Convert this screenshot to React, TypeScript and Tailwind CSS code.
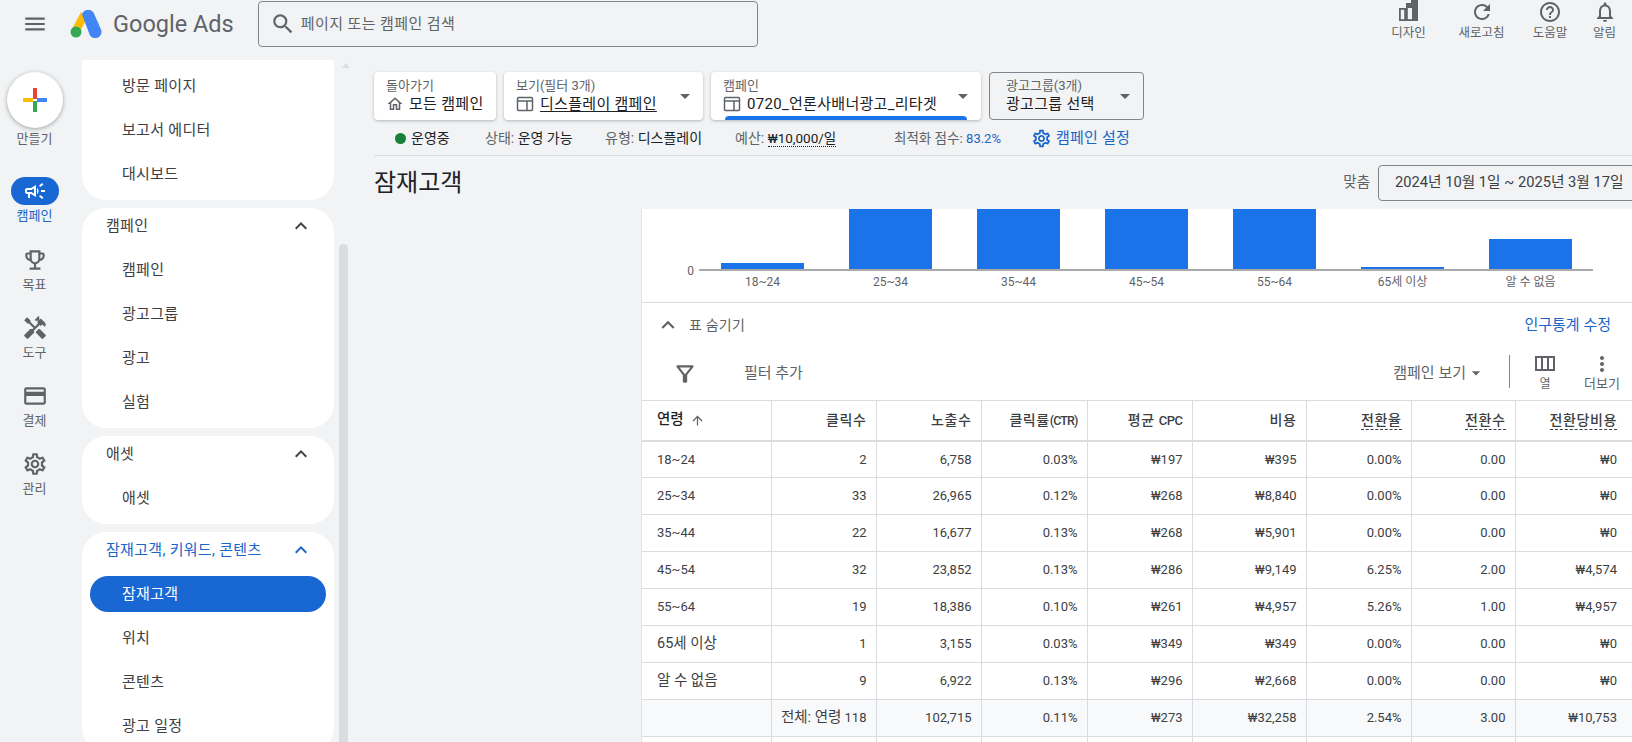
import React from "react";
import {
  MdMenu, MdSearch, MdOutlineHome, MdOutlineCampaign, MdOutlineEmojiEvents, MdHandyman, MdOutlineCreditCard,
  MdOutlineSettings, MdRefresh, MdHelpOutline, MdNotificationsNone, MdOutlineFilterAlt,
  MdMoreVert, MdArrowUpward, MdExpandLess, MdArrowDropDown,
} from "react-icons/md";

const WebIcon = () => (
  <svg width="18" height="18" viewBox="0 0 18 18" fill="none" stroke="#5f6368" strokeWidth="1.5" className="shrink-0">
    <rect x="1.5" y="2.5" width="15" height="13" rx="1" />
    <path d="M1.5 6h15M11 6v9.5" />
  </svg>
);

const ColumnsIcon = () => (
  <svg width="24" height="24" viewBox="0 0 24 24" fill="none" stroke="#5f6368" strokeWidth="2">
    <rect x="3" y="5" width="18" height="13" />
    <path d="M9 5v13M15 5v13" />
  </svg>
);

const Logo = () => (
  <svg width="32" height="28" viewBox="0 0 32 28">
    <path d="M11 2 L1.5 20 L8 25 L17 8 Z" fill="#fbbc04" />
    <path d="M12 4.5 a6.5 6.5 0 0 1 11.5 -2 L31 19.5 a6.3 6.3 0 0 1 -11 6 Z" fill="#4285f4" />
    <circle cx="6" cy="22" r="5.5" fill="#34a853" />
  </svg>
);

const Plus = () => (
  <svg width="26" height="26" viewBox="0 0 26 26">
    <rect x="11" y="1" width="4" height="11" fill="#ea4335" />
    <rect x="15" y="11" width="10" height="4" fill="#4285f4" />
    <rect x="11" y="14" width="4" height="11" fill="#34a853" />
    <rect x="1" y="11" width="10" height="4" fill="#fbbc04" />
  </svg>
);

const DesignIcon = () => (
  <svg width="22" height="24" viewBox="0 0 22 24" fill="#5f6368">
    <path d="M1 8h7v13H1V8Zm1.8 1.8v9.4h3.4V9.8H2.8Z" />
    <path d="M8 3h5V0h7v21H8V3Z" />
    <rect x="9.8" y="8" width="4.2" height="11.2" fill="#f1f3f4" />
  </svg>
);

function RailItem({ icon, label }: { icon: React.ReactNode; label: string }) {
  return (
    <div className="flex h-[68px] flex-col items-center pt-[1px]">
      <div className="flex h-[28px] items-center text-[#5f6368]">{icon}</div>
      <div className="mt-[3px] text-[13px] leading-[16px] text-[#5f6368]">{label}</div>
    </div>
  );
}

function NavRow({ label, active }: { label: string; active?: boolean }) {
  return (
    <div className="flex h-11 items-center px-2">
      <div className={`flex h-9 flex-1 items-center rounded-full pl-8 text-[15px] tracking-[0.3px] ${active ? "bg-[#1967d2] text-white" : "text-[#3c4043]"}`}>
        {label}
      </div>
    </div>
  );
}

function NavGroup({ title, items, active, blue }: { title: string; items: string[]; active?: string; blue?: boolean }) {
  return (
    <div className="rounded-[24px] bg-white pb-[4px]">
      <div className={`flex h-9 items-center justify-between pl-[24px] pr-[21px] text-[15px] tracking-[0.3px] ${blue ? "text-[#1a65c9]" : "text-[#3c4043]"}`}>
        <span>{title}</span>
        <MdExpandLess size={24} color={blue ? "#1a65c9" : "#3c4043"} />
      </div>
      <div className="mt-[4px]">
        {items.map((i) => <NavRow key={i} label={i} active={i === active} />)}
      </div>
    </div>
  );
}

function Crumb({ label, width, children, arrow, outline, bar }: { label: string; width: string; children: React.ReactNode; arrow?: boolean; outline?: boolean; bar?: boolean }) {
  return (
    <div className={`relative flex h-12 items-center rounded-[4px] pl-3 pr-1 ${width} ${outline ? "border border-[#80868b]" : "bg-white shadow-[0_1px_3px_rgba(60,64,67,0.35)]"}`}>
      <div className="min-w-0 flex-1">
        <div className="text-[13px] leading-[16px] text-[#5f6368]">{label}</div>
        <div className="flex items-center gap-[6px] whitespace-nowrap text-[15px] leading-[20px] tracking-[0.3px] text-[#202124]">{children}</div>
      </div>
      {arrow && <MdArrowDropDown size={24} color="#5f6368" className="mb-[1px] mr-[2px]" />}
      {bar && <div className="absolute bottom-0 left-[14px] right-[14px] h-1 rounded-t-[4px] bg-[#1a73e8]" />}
    </div>
  );
}

const bars = [
  { l: "18~24", h: 6 },
  { l: "25~34", h: 60 },
  { l: "35~44", h: 60 },
  { l: "45~54", h: 60 },
  { l: "55~64", h: 60 },
  { l: "65세 이상", h: 2 },
  { l: "알 수 없음", h: 30 },
];

const columns = ["w-[129px]", "w-[105px]", "w-[105px]", "w-[106px]", "w-[105px]", "w-[114px]", "w-[105px]", "w-[104px]", "w-[118px]"];

const rows = [
  ["18~24", "2", "6,758", "0.03%", "₩197", "₩395", "0.00%", "0.00", "₩0"],
  ["25~34", "33", "26,965", "0.12%", "₩268", "₩8,840", "0.00%", "0.00", "₩0"],
  ["35~44", "22", "16,677", "0.13%", "₩268", "₩5,901", "0.00%", "0.00", "₩0"],
  ["45~54", "32", "23,852", "0.13%", "₩286", "₩9,149", "6.25%", "2.00", "₩4,574"],
  ["55~64", "19", "18,386", "0.10%", "₩261", "₩4,957", "5.26%", "1.00", "₩4,957"],
  ["65세 이상", "1", "3,155", "0.03%", "₩349", "₩349", "0.00%", "0.00", "₩0"],
  ["알 수 없음", "9", "6,922", "0.13%", "₩296", "₩2,668", "0.00%", "0.00", "₩0"],
];
const total = ["", "", "102,715", "0.11%", "₩273", "₩32,258", "2.54%", "3.00", "₩10,753"];
const headers: { key: string; node: React.ReactNode }[] = [
  { key: "클릭수", node: "클릭수" },
  { key: "노출수", node: "노출수" },
  { key: "클릭률", node: <>클릭률<span className="text-[12.5px] tracking-[-0.9px]">(CTR)</span></> },
  { key: "평균", node: <>평균 <span className="text-[13px] tracking-[-0.5px]">CPC</span></> },
  { key: "비용", node: "비용" },
  { key: "전환율", node: "전환율" },
  { key: "전환수", node: "전환수" },
  { key: "전환당비용", node: "전환당비용" },
];

function cellRight(i: number) {
  return i === 8 ? "pr-[16px]" : "pr-[9px]";
}

function TopAction({ icon, label, width }: { icon: React.ReactNode; label: string; width: string }) {
  return (
    <div className={`flex flex-col items-center ${width}`}>
      <div className="flex h-[22px] items-start">{icon}</div>
      <div className="mt-[3px] text-[12.5px] leading-[16px] text-[#5f6368]">{label}</div>
    </div>
  );
}

export default function App() {
  return (
    <div className="flex h-[742px] w-[1632px] flex-col overflow-hidden bg-[#f1f3f4] font-['Roboto','Noto_Sans_CJK_KR',sans-serif]">
      {/* Header */}
      <header className="flex h-[60px] shrink-0 items-start">
        <div className="ml-[22px] mt-[11px] flex items-center">
          <MdMenu size={26} color="#5f6368" />
        </div>
        <div className="ml-[22px] mt-[10px]"><Logo /></div>
        <div className="ml-[11px] mt-[8px] text-[23.5px] leading-[32px] text-[#5f6368]">Google Ads</div>
        <div className="ml-[24px] mt-[1px] flex h-[46px] w-[500px] items-center rounded-[4px] border border-[#80868b] pl-[11px]">
          <MdSearch size={26} color="#5f6368" />
          <span className="ml-[5px] text-[15px] tracking-[0.4px] text-[#5f6368]">페이지 또는 캠페인 검색</span>
        </div>
        <div className="ml-auto mr-[5px] flex">
          <TopAction icon={<DesignIcon />} label="디자인" width="w-[73px]" />
          <TopAction icon={<MdRefresh size={24} color="#5f6368" />} label="새로고침" width="w-[73px]" />
          <TopAction icon={<MdHelpOutline size={24} color="#5f6368" />} label="도움말" width="w-[64px]" />
          <TopAction icon={<MdNotificationsNone size={24} color="#5f6368" />} label="알림" width="w-[45px]" />
        </div>
      </header>

      <div className="flex min-h-0 flex-1">
        {/* Rail */}
        <aside className="flex w-[82px] shrink-0 flex-col">
          <div className="flex w-[69px] flex-col items-center">
            <div className="mt-[12px] flex h-14 w-14 items-center justify-center rounded-full bg-white shadow-[0_1px_4px_rgba(60,64,67,0.45)]">
              <Plus />
            </div>
            <div className="mt-[3px] text-[13px] leading-[16px] text-[#5f6368]">만들기</div>
            <div className="mt-[30px] flex h-[28px] w-[48px] items-center justify-center rounded-full bg-[#1967d2]">
              <MdOutlineCampaign size={24} color="white" />
            </div>
            <div className="mt-[3px] text-[13px] leading-[16px] text-[#1a65c9]">캠페인</div>
            <div className="mt-[21px] w-full">
              <RailItem icon={<MdOutlineEmojiEvents size={26} />} label="목표" />
              <RailItem icon={<MdHandyman size={26} />} label="도구" />
              <RailItem icon={<MdOutlineCreditCard size={26} />} label="결제" />
              <RailItem icon={<MdOutlineSettings size={26} />} label="관리" />
            </div>
          </div>
        </aside>

        {/* Nav */}
        <nav className="flex w-[252px] shrink-0 flex-col gap-2">
          <div className="rounded-b-[24px] bg-white pb-[4px] pt-[4px]">
            <NavRow label="방문 페이지" />
            <NavRow label="보고서 에디터" />
            <NavRow label="대시보드" />
          </div>
          <NavGroup title="캠페인" items={["캠페인", "광고그룹", "광고", "실험"]} />
          <NavGroup title="애셋" items={["애셋"]} />
          <NavGroup blue title="잠재고객, 키워드, 콘텐츠" items={["잠재고객", "위치", "콘텐츠", "광고 일정"]} active="잠재고객" />
        </nav>

        {/* Scrollbar gutter */}
        <div className="w-[40px] shrink-0 pl-[5px]">
          <div className="ml-[3px] mt-[3px] h-0 w-0 border-x-[4px] border-b-[5px] border-x-transparent border-b-[#dadce0]" />
          <div className="mt-[176px] h-[520px] w-[9px] rounded-t-full bg-[#dadce0]" />
        </div>

        {/* Main */}
        <main className="flex min-w-0 flex-1 flex-col">
          <div className="mt-3 flex gap-2">
            <Crumb label="돌아가기" width="w-[122px]">
              <MdOutlineHome size={18} color="#5f6368" className="-mr-[1px]" />
              <span>모든 캠페인</span>
            </Crumb>
            <Crumb label="보기(필터 3개)" width="w-[199px]" arrow>
              <WebIcon />
              <span className="underline underline-offset-2">디스플레이 캠페인</span>
            </Crumb>
            <Crumb label="캠페인" width="w-[270px]" arrow bar>
              <WebIcon />
              <span>0720_언론사배너광고_리타겟</span>
            </Crumb>
            <Crumb label="광고그룹(3개)" width="w-[155px] !pl-4" arrow outline>
              <span>광고그룹 선택</span>
            </Crumb>
          </div>

          <div className="flex h-9 items-center border-b border-[#dadce0] pt-[2px] text-[14px] text-[#202124]">
            <span className="ml-[21px] h-[11px] w-[11px] rounded-full bg-[#188038]" />
            <span className="ml-[5px] w-[74px]">운영중</span>
            <span className="w-[120px]"><span className="text-[#5f6368]">상태:</span> 운영 가능</span>
            <span className="w-[130px]"><span className="text-[#5f6368]">유형:</span> 디스플레이</span>
            <span className="w-[159px]"><span className="text-[#5f6368]">예산:</span> <span className="border-b border-dotted border-[#202124] text-[13.5px]">₩10,000/일</span></span>
            <span className="w-[137px] text-[13.5px] text-[#5f6368]">최적화 점수: <span className="text-[13px] text-[#1a65c9]">83.2%</span></span>
            <MdOutlineSettings size={21} color="#1a65c9" />
            <span className="ml-[4px] text-[15px] tracking-[0.2px] text-[#1a65c9]">캠페인 설정</span>
          </div>

          <div className="flex h-[53px] shrink-0 items-center">
            <h1 className="text-[24px] font-normal text-[#202124]">잠재고객</h1>
            <span className="ml-auto text-[14.5px] text-[#5f6368]">맞춤</span>
            <div className="ml-[8px] mr-[-8px] flex h-9 w-[262px] shrink-0 items-center whitespace-nowrap rounded-[4px] border border-[#80868b] pl-[16px] text-[14.7px] text-[#3c4043]">
              2024년 10월 1일 ~ 2025년 3월 17일
            </div>
          </div>

          {/* Panel */}
          <section className="ml-[267px] min-h-0 flex-1 overflow-hidden border-l border-[#e3e5e8] bg-white">
            {/* Chart */}
            <div className="h-[94px] border-b border-[#dadce0]">
              <div className="flex h-[62px] items-end">
                <span className="w-[52px] translate-y-[7px] text-right text-[12px] leading-[14px] text-[#5f6368]">0</span>
                <div className="ml-[5px] flex h-[62px] w-[894px] items-end border-b-2 border-[#aaaaaa] pl-[22px]">
                  {bars.map((b) => (
                    <div key={b.l} className="mr-[45px] w-[83px] bg-[#1a73e8] last:mr-0" style={{ height: b.h }} />
                  ))}
                </div>
              </div>
              <div className="ml-[57px] mt-[3px] flex w-[894px] pl-[22px] text-[12px] leading-[16px] text-[#5f6368]">
                {bars.map((b) => (
                  <div key={b.l} className="mr-[45px] w-[83px] text-center last:mr-0">{b.l}</div>
                ))}
              </div>
            </div>

            {/* Toolbar */}
            <div className="flex h-[44px] items-center pl-[13px] pr-[21px]">
              <MdExpandLess size={26} color="#5f6368" />
              <span className="ml-[8px] text-[14px] tracking-[0.2px] text-[#5f6368]">표 숨기기</span>
              <span className="ml-auto text-[15px] text-[#1a65c9]">인구통계 수정</span>
            </div>
            <div className="flex h-[53px] items-start pr-[10px]">
              <MdOutlineFilterAlt size={26} color="#5f6368" className="ml-[30px] mt-[14px]" />
              <span className="ml-[46px] mt-[16px] text-[15px] leading-[20px] text-[#5f6368]">필터 추가</span>
              <span className="ml-auto mt-[16px] text-[15px] leading-[20px] text-[#5f6368]">캠페인 보기</span>
              <MdArrowDropDown size={20} color="#5f6368" className="mt-[16px]" />
              <div className="ml-[23px] mt-[8px] h-[33px] w-px bg-[#80868b]" />
              <div className="ml-[20px] flex w-[30px] flex-col items-center pt-[5px]">
                <ColumnsIcon />
                <span className="text-[12px] leading-[16px] text-[#5f6368]">열</span>
              </div>
              <div className="ml-[22px] flex w-[40px] flex-col items-center pt-[5px]">
                <MdMoreVert size={24} color="#5f6368" />
                <span className="whitespace-nowrap text-[13px] leading-[16px] text-[#5f6368]">더보기</span>
              </div>
            </div>

            {/* Table */}
            <table className="w-[991px] table-fixed border-collapse text-[13px] text-[#3c4043]">
              <colgroup>
                {columns.map((c, i) => <col key={i} className={c} />)}
              </colgroup>
              <thead>
                <tr className="h-[40px] border-y border-b-2 border-t-[#dadce0] border-b-[#dadce0]">
                  <th className="pl-[15px] text-left text-[14.5px] font-medium text-[#202124]">
                    <span className="flex items-center gap-[6px]">연령 <MdArrowUpward size={15} color="#5f6368" /></span>
                  </th>
                  {headers.map((h, i) => (
                    <th key={h.key} className={`whitespace-nowrap border-l border-[#dadce0] text-right text-[14px] font-medium tracking-[0.6px] text-[#3c4043] ${cellRight(i + 1)}`}>
                      <span className={i >= 5 ? "border-b border-dashed border-[#3c4043] pb-px" : ""}>{h.node}</span>
                    </th>
                  ))}
                </tr>
              </thead>
              <tbody>
                {rows.map((r) => (
                  <tr key={r[0]} className="h-[37px] border-b border-[#dadce0]">
                    {r.map((c, i) => (
                      <td key={i} className={i === 0 ? `pl-[15px] text-left ${r[0].length > 5 ? "text-[14.5px]" : ""}` : `border-l border-[#dadce0] text-right ${cellRight(i)}`}>{c}</td>
                    ))}
                  </tr>
                ))}
                <tr className="h-[37px] border-b border-[#dadce0] bg-[#f8f9fa]">
                  {total.map((c, i) => (
                    <td key={i} className={i === 0 ? "pl-[15px]" : `whitespace-nowrap border-l border-[#dadce0] text-right ${cellRight(i)}`}>
                      {i === 1 ? <><span className="text-[14.5px]">전체: 연령</span> 118</> : c}
                    </td>
                  ))}
                </tr>
                <tr className="h-[37px]">
                  {total.map((_, i) => (
                    <td key={i} className={i === 0 ? "" : "border-l border-[#dadce0]"} />
                  ))}
                </tr>
              </tbody>
            </table>
          </section>
        </main>
      </div>
    </div>
  );
}
